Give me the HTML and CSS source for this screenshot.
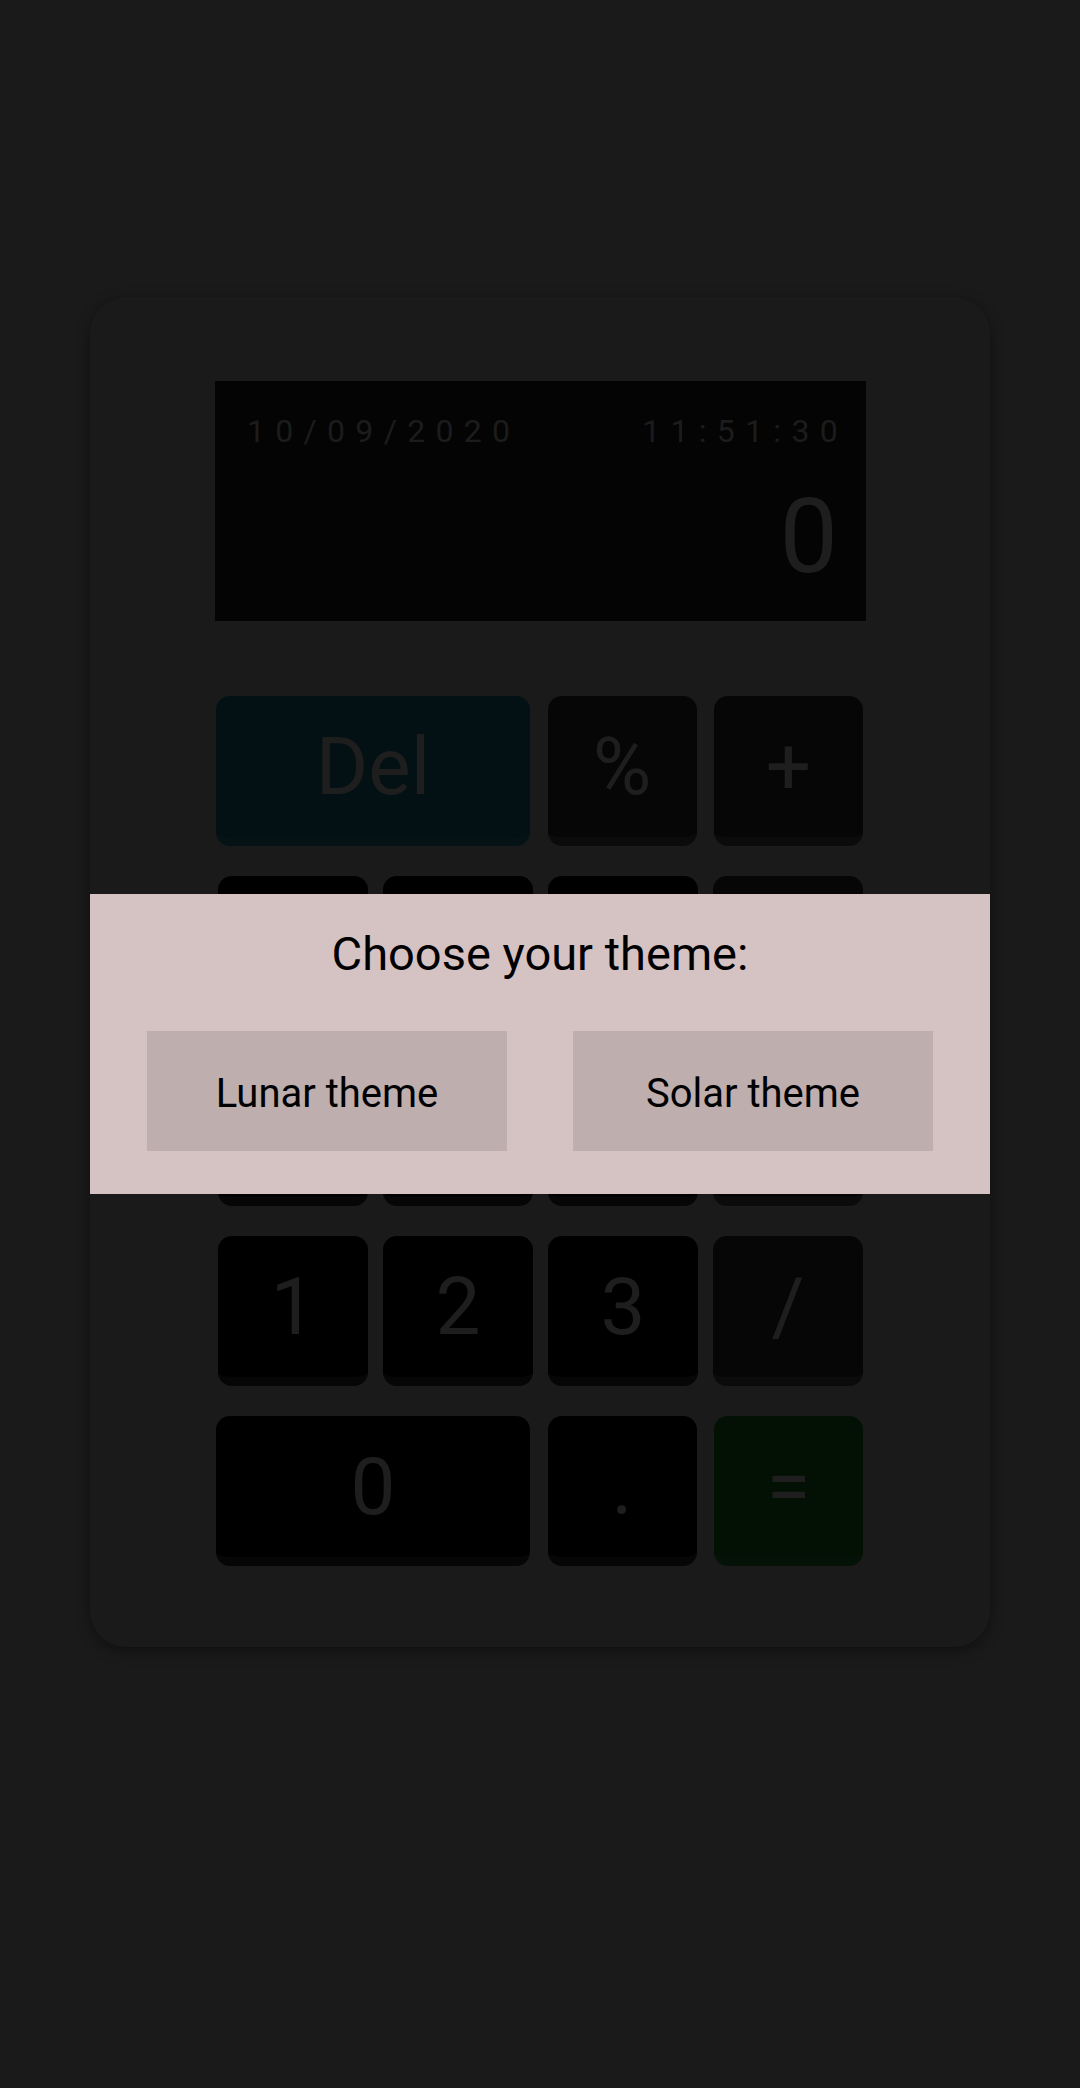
FILE: index.html
```html
<!DOCTYPE html>
<html lang="en">
<head>
<meta charset="utf-8">
<title>Calculator</title>
<link rel="stylesheet" href="styles.css">
</head>
<body>
<div class="calc">
  <div class="display">
    <div class="display-top">
      <span class="date">10/09/2020</span>
      <span class="time">11:51:30</span>
    </div>
    <div class="result">0</div>
  </div>
  <div class="keys">
    <div class="row row3">
      <button class="key key-del">Del</button>
      <button class="key key-op">%</button>
      <button class="key key-op">+</button>
    </div>
    <div class="row row4">
      <button class="key">7</button>
      <button class="key">8</button>
      <button class="key">9</button>
      <button class="key key-op">*</button>
    </div>
    <div class="row row4">
      <button class="key">4</button>
      <button class="key">5</button>
      <button class="key">6</button>
      <button class="key key-op">-</button>
    </div>
    <div class="row row4">
      <button class="key">1</button>
      <button class="key">2</button>
      <button class="key">3</button>
      <button class="key key-op">/</button>
    </div>
    <div class="row row3">
      <button class="key">0</button>
      <button class="key">.</button>
      <button class="key key-eq">=</button>
    </div>
  </div>
  <div class="theme-dialog">
    <div class="theme-title">Choose your theme:</div>
    <div class="theme-buttons">
      <button class="theme-btn">Lunar theme</button>
      <button class="theme-btn">Solar theme</button>
    </div>
  </div>
</div>
</body>
</html>
```
FILE: styles.css
```css
* { box-sizing: border-box; }
html, body {
  margin: 0;
  padding: 0;
  background: #1a1a1a;
  font-family: Roboto, "Liberation Sans", sans-serif;
}
body {
  height: 2088px;
  padding-top: 297px;
  overflow: hidden;
}
.calc {
  position: relative;
  margin-left: 90px;
  width: 900px;
  height: 1350px;
  background: #1a1a1a;
  border-radius: 36px;
  box-shadow: 0 4px 14px rgba(0, 0, 0, 0.4);
  padding-top: 84px;
}
.display {
  width: 651px;
  height: 240px;
  margin-left: 125px;
  background: #040404;
  padding: 31px 28px 23px 32px;
  display: flex;
  flex-direction: column;
  justify-content: space-between;
}
.display-top {
  display: flex;
  justify-content: space-between;
  font-size: 32px;
  letter-spacing: 10.3px;
  color: #1c1c1c;
}
.time { margin-right: -10px; }
.result {
  text-align: right;
  font-size: 104px;
  line-height: 1.172;
  color: #1e1e1e;
}
.keys {
  margin-top: 75px;
  margin-left: 126px;
  width: 647px;
  display: flex;
  flex-direction: column;
  gap: 30px;
}
.row { display: grid; }
.row3 {
  grid-template-columns: 314px 149px 149px;
  justify-content: space-between;
}
.row4 {
  grid-template-columns: repeat(4, 150px);
  column-gap: 15px;
  padding-left: 2px;
}
.key {
  height: 150px;
  border: none;
  border-bottom: 9px solid #060606;
  border-radius: 14px;
  background: #000;
  color: #1e1e1e;
  font-family: Roboto, "Liberation Sans", sans-serif;
  font-size: 80px;
  padding: 0;
  margin: 0;
}
.key-op {
  background: #060606;
  border-bottom-color: #0b0b0b;
}
.key-del {
  background: #031114;
  border-bottom-color: #061316;
}
.key-eq {
  background: #031105;
  border-bottom-color: #051208;
}
.theme-dialog {
  position: absolute;
  top: 597px;
  left: 0;
  width: 900px;
  height: 300px;
  background: #d5c2c2;
  padding: 32px 57px 0;
}
.theme-title {
  font-size: 47px;
  line-height: 55px;
  color: #000;
  text-align: center;
}
.theme-buttons {
  margin-top: 50px;
  display: flex;
  justify-content: space-between;
}
.theme-btn {
  width: 360px;
  height: 120px;
  border: none;
  background: #beaeae;
  color: #000;
  font-family: Roboto, "Liberation Sans", sans-serif;
  font-size: 40px;
  padding: 4px 0 0;
  margin: 0;
}
```
